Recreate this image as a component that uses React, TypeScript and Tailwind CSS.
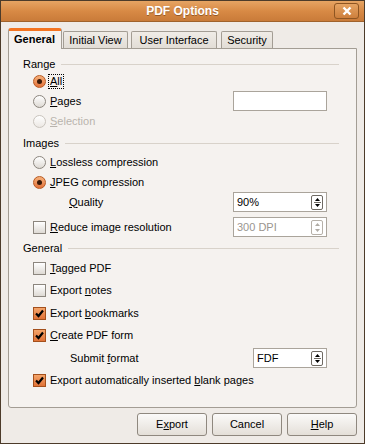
import React from "react";

const U = ({ children }: { children: React.ReactNode }) => <span className="underline">{children}</span>;

const Radio = ({ checked = false, disabled = false }: { checked?: boolean; disabled?: boolean }) => (
  <span
    className={`flex h-[13px] w-[13px] shrink-0 items-center justify-center rounded-full border ${
      checked
        ? "border-[#b85a22] bg-gradient-to-b from-[#f6b17a] to-[#e2723a]"
        : disabled
          ? "border-[#c9c4bd] bg-gradient-to-b from-[#ffffff] to-[#ece8e3]"
          : "border-[#8c867e] bg-gradient-to-b from-[#ffffff] to-[#dedad4]"
    }`}
  >
    {checked && <span className="h-[5px] w-[5px] rounded-full bg-[#3a1a08]" />}
  </span>
);

const Check = ({ checked = false }: { checked?: boolean }) => (
  <span
    className={`flex h-[13px] w-[13px] shrink-0 items-center justify-center border ${
      checked
        ? "border-[#a4501c] bg-gradient-to-b from-[#f4a56a] to-[#e07236]"
        : "border-[#8c867e] bg-gradient-to-b from-[#ffffff] to-[#dedad4]"
    }`}
  >
    {checked && (
      <svg width="9" height="9" viewBox="0 0 9 9">
        <path d="M1 4.5 L3.5 7 L8 1.5" fill="none" stroke="#000" strokeWidth="2.2" />
      </svg>
    )}
  </span>
);

const Spin = ({ disabled = false }: { disabled?: boolean }) => (
  <span
    className={`flex h-[15px] w-[12px] flex-col items-center justify-center rounded-[2px] border ${
      disabled ? "border-[#b6b0a8]" : "border-[#6f6a63]"
    }`}
  >
    <svg width="7" height="11" viewBox="0 0 7 11">
      <path d="M3.5 1 L6 4 L1 4 Z" fill={disabled ? "#b0aba4" : "#000"} />
      {!disabled && <line x1="0" y1="5.5" x2="7" y2="5.5" stroke="#6f6a63" strokeWidth="1" />}
      <path d="M1 7 L6 7 L3.5 10 Z" fill={disabled ? "#b0aba4" : "#000"} />
    </svg>
  </span>
);

const Field = ({
  value = "",
  spin = false,
  disabled = false,
  width = "w-[94px]",
}: {
  value?: string;
  spin?: boolean;
  disabled?: boolean;
  width?: string;
}) => (
  <div
    className={`flex h-[20px] ${width} items-center justify-between border border-[#aaa49b] bg-white pl-[3px] pr-[3px] ${
      disabled ? "text-[#9a958f]" : "text-black"
    }`}
  >
    <span>{value}</span>
    {spin && <Spin disabled={disabled} />}
  </div>
);

const Group = ({ title }: { title: string }) => (
  <div className="flex h-[14px] items-center pl-[14px] pr-[17px]">
    <span>{title}</span>
    <div className="ml-[6px] h-px flex-1 bg-[#d8d2ca]" />
  </div>
);

const Row = ({ children, h = "h-[20px]" }: { children: React.ReactNode; h?: string }) => (
  <div className={`flex ${h} items-center justify-between pl-[24px] pr-[29px]`}>{children}</div>
);

const Tab = ({ label, active = false, w }: { label: string; active?: boolean; w: string }) =>
  active ? (
    <div
      className={`relative z-10 -mb-px flex h-[21px] ${w} items-center rounded-t-[3px] border border-b-0 border-[#a39d94] border-t-[#f47421] bg-[#f5f2ef] pl-[5px] font-bold`}
    >
      <div className="absolute left-0 right-0 top-0 h-[2px] bg-[#f47421]" />
      {label}
    </div>
  ) : (
    <div
      className={`flex h-[17px] ${w} items-center justify-center rounded-t-[2px] border border-b-0 border-[#a39d94] bg-gradient-to-b from-[#f0ece7] to-[#e2ddd6]`}
    >
      {label}
    </div>
  );

const Button = ({ children }: { children: React.ReactNode }) => (
  <button className="flex h-[23px] w-[70px] items-center justify-center rounded-[3px] border border-[#8f887f] bg-gradient-to-b from-[#fbfaf9] to-[#e4dfd8] text-black">
    {children}
  </button>
);

export default function App() {
  return (
    <div className="flex h-[444px] w-[365px] flex-col border border-[#4c3b2a] bg-[#efebe7] font-['Liberation_Sans',Arial,sans-serif] text-[11px] leading-none text-black">
      <div className="relative flex h-[21px] shrink-0 items-center justify-center border-b border-[#a0622c] bg-gradient-to-b from-[#e6a463] via-[#d88a45] to-[#c97b39]">
        <span className="text-[12px] font-bold text-white [text-shadow:0_1px_0_rgba(90,45,10,0.5)]">PDF Options</span>
        <div className="absolute right-[5px] top-[2px] flex h-[16px] w-[25px] items-center justify-center rounded-[3px] border border-[#8e5522] bg-gradient-to-b from-[#e6a463] to-[#cd7f3c]">
          <svg width="10" height="10" viewBox="0 0 10 10">
            <path d="M1.5 1.5 L8.5 8.5 M8.5 1.5 L1.5 8.5" stroke="#fff" strokeWidth="2.4" />
          </svg>
        </div>
      </div>

      <div className="flex flex-1 flex-col px-[7px] pt-[6px]">
        <div className="flex h-[20px] items-end gap-[1px]">
          <Tab label="General" active w="w-[54px]" />
          <Tab label="Initial View" w="w-[65px]" />
          <div className="w-px" />
          <Tab label="User Interface" w="w-[86px]" />
          <div className="w-[2px]" />
          <Tab label="Security" w="w-[52px]" />
        </div>

        <div className="flex h-[360px] flex-col rounded-b-[3px] border border-[#a39d94] bg-[#f5f2ef] pt-[8px]">
          <Group title="Range" />
          <Row>
            <div className="flex items-center gap-[4px]">
              <Radio checked />
              <span className="outline-1 outline-dotted outline-offset-[1px] outline-black">
                <U>A</U>ll
              </span>
            </div>
          </Row>
          <Row>
            <div className="flex items-center gap-[4px]">
              <Radio />
              <span>
                <U>P</U>ages
              </span>
            </div>
            <Field />
          </Row>
          <Row>
            <div className="flex items-center gap-[4px] text-[#b9b4ad]">
              <Radio disabled />
              <span>
                <U>S</U>election
              </span>
            </div>
          </Row>

          <div className="h-[5px]" />
          <Group title="Images" />
          <div className="h-[2px]" />
          <Row>
            <div className="flex items-center gap-[4px]">
              <Radio />
              <span>
                <U>L</U>ossless compression
              </span>
            </div>
          </Row>
          <Row>
            <div className="flex items-center gap-[4px]">
              <Radio checked />
              <span>
                <U>J</U>PEG compression
              </span>
            </div>
          </Row>
          <Row>
            <span className="pl-[36px]">
              <U>Q</U>uality
            </span>
            <Field value="90%" spin />
          </Row>
          <div className="h-[5px]" />
          <Row>
            <div className="flex items-center gap-[4px]">
              <Check />
              <span>
                <U>R</U>educe image resolution
              </span>
            </div>
            <Field value="300 DPI" spin disabled />
          </Row>

          <div className="h-[4px]" />
          <Group title="General" />
          <div className="h-[2px]" />
          <Row h="h-[22.5px]">
            <div className="flex items-center gap-[4px]">
              <Check />
              <span>
                <U>T</U>agged PDF
              </span>
            </div>
          </Row>
          <Row h="h-[22.5px]">
            <div className="flex items-center gap-[4px]">
              <Check />
              <span>
                Export <U>n</U>otes
              </span>
            </div>
          </Row>
          <Row h="h-[22.5px]">
            <div className="flex items-center gap-[4px]">
              <Check checked />
              <span>
                Export <U>b</U>ookmarks
              </span>
            </div>
          </Row>
          <Row h="h-[22.5px]">
            <div className="flex items-center gap-[4px]">
              <Check checked />
              <span>
                <U>C</U>reate PDF form
              </span>
            </div>
          </Row>
          <Row h="h-[22.5px]">
            <span className="pl-[37px]">
              Submit <U>f</U>ormat
            </span>
            <Field value="FDF" spin width="w-[74px]" />
          </Row>
          <Row h="h-[22.5px]">
            <div className="flex items-center gap-[4px]">
              <Check checked />
              <span>
                Export automatically inserted <U>b</U>lank pages
              </span>
            </div>
          </Row>
        </div>

        <div className="mt-[5px] flex justify-end gap-[5px]">
          <Button>
            E<U>x</U>port
          </Button>
          <Button>Cancel</Button>
          <Button>
            <U>H</U>elp
          </Button>
        </div>
      </div>
    </div>
  );
}
